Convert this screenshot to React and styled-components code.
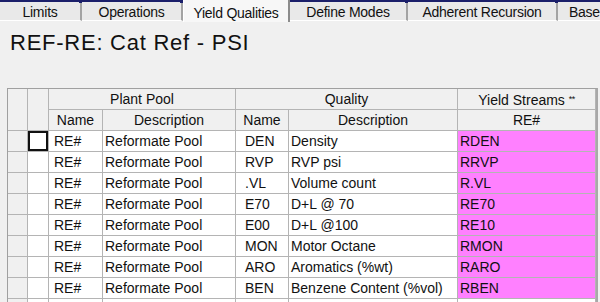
import React from 'react';
import styled, { createGlobalStyle } from 'styled-components';

const GlobalStyle = createGlobalStyle`
  html, body {
    margin: 0;
    padding: 0;
    background: #f0f0f0;
  }
`;

const tabs = [
  { label: 'Limits', width: 82 },
  { label: 'Operations', width: 101 },
  { label: 'Yield Qualities', width: 107, active: true },
  { label: 'Define Modes', width: 118 },
  { label: 'Adherent Recursion', width: 150 },
  { label: 'Base', width: 60, left: true }
];

const rows = [
  ['RE#', 'Reformate Pool', 'DEN', 'Density', 'RDEN'],
  ['RE#', 'Reformate Pool', 'RVP', 'RVP psi', 'RRVP'],
  ['RE#', 'Reformate Pool', '.VL', 'Volume count', 'R.VL'],
  ['RE#', 'Reformate Pool', 'E70', 'D+L @ 70', 'RE70'],
  ['RE#', 'Reformate Pool', 'E00', 'D+L @100', 'RE10'],
  ['RE#', 'Reformate Pool', 'MON', 'Motor Octane', 'RMON'],
  ['RE#', 'Reformate Pool', 'ARO', 'Aromatics (%wt)', 'RARO'],
  ['RE#', 'Reformate Pool', 'BEN', 'Benzene Content (%vol)', 'RBEN']
];

// left padding of each data column, as the grid draws them
const pads = [5, 2, 9, 2, 2];

const App = () => (
  <Page>
    <GlobalStyle />
    <TabStrip>
      {tabs.map(t => (
        <Tab key={t.label} $width={t.width} $active={t.active} $left={t.left}>
          {t.label}
        </Tab>
      ))}
    </TabStrip>

    <Title>REF-RE: Cat Ref - PSI</Title>

    <Grid>
      <Corner />
      <Corner />
      <HeadCell $span={2}>Plant Pool</HeadCell>
      <HeadCell $span={2}>Quality</HeadCell>
      <HeadCell>
        Yield Streams <Stars>**</Stars>
      </HeadCell>
      <HeadCell>Name</HeadCell>
      <HeadCell>Description</HeadCell>
      <HeadCell>Name</HeadCell>
      <HeadCell>Description</HeadCell>
      <HeadCell>RE#</HeadCell>

      {rows.map((r, i) => (
        <React.Fragment key={i}>
          <RowHead />
          <Cell $pad={0}>{i === 0 && <FocusBox />}</Cell>
          {r.map((v, j) => (
            <Cell key={j} $pad={pads[j]} $yield={j === 4}>
              {v}
            </Cell>
          ))}
        </React.Fragment>
      ))}

      <RowHead />
      {pads.concat(0).map((p, j) => (
        <Cell key={j} $pad={p} />
      ))}
    </Grid>
  </Page>
);
export default App;

const Page = styled.div`
  width: 600px;
  height: 302px;
  overflow: hidden;
  background: #f0f0f0;
  font-family: "Liberation Sans", Arial, sans-serif;
  color: #000;
`;

const TabStrip = styled.div`
  display: flex;
  height: 21px;
  white-space: nowrap;
`;

const Tab = styled.div`
  position: relative;
  flex: 0 0 ${({ $width }) => $width}px;
  box-sizing: border-box;
  height: ${({ $active }) => ($active ? 22 : 21)}px;
  padding-top: ${({ $active }) => ($active ? 4 : 2)}px;
  padding-left: ${({ $left }) => ($left ? 11 : 0)}px;
  display: flex;
  justify-content: ${({ $left }) => ($left ? 'flex-start' : 'center')};
  align-items: center;
  font-size: 14px;
  letter-spacing: -0.25px;
  color: #111;
  background: ${({ $active }) => ($active ? '#f7f7f7' : '#e9e9e9')};
  border-top: ${({ $active }) => ($active ? 'none' : '2px solid #1b1f6a')};
  border-left: ${({ $active }) => ($active ? '1px solid #ffffff' : 'none')};
  border-right: 2px solid ${({ $active }) => ($active ? '#8c8c8c' : '#a3a3a3')};
  border-bottom: ${({ $active }) => ($active ? 'none' : '1px solid #ffffff')};

  &::after {
    content: '';
    position: absolute;
    top: -2px;
    right: -3px;
    width: 4px;
    height: 3px;
    background: ${({ $active }) => ($active ? 'transparent' : '#1b1f6a')};
  }
`;

const Title = styled.h1`
  margin: 9px 0 0 10px;
  font-size: 22px;
  font-weight: normal;
  line-height: 26px;
  letter-spacing: 0.75px;
  color: #111;
`;

const Grid = styled.div`
  margin: 32px 0 0 7px;
  display: grid;
  grid-template-columns: 20px 21px 54px 133px 53px 169px 138px;
  grid-auto-rows: 21px;
  width: max-content;
  border-top: 1px solid #a0a0a0;
  border-left: 1px solid #a0a0a0;
  border-right: 2px solid #a8a8a8;
`;

const CellBase = styled.div`
  box-sizing: border-box;
  border-right: 1px solid #b4b4b4;
  border-bottom: 1px solid #b4b4b4;
  font-size: 14px;
  line-height: 20px;
  white-space: nowrap;
  overflow: hidden;
`;

const Corner = styled(CellBase)`
  grid-row: span 2;
  background: #f0f0f0;
`;

const HeadCell = styled(CellBase)`
  grid-column: span ${({ $span }) => $span || 1};
  background: #f0f0f0;
  text-align: center;
  color: #111;
`;

const Stars = styled.span`
  font-size: 9px;
  vertical-align: 3px;
  letter-spacing: -0.5px;
`;

const RowHead = styled(CellBase)`
  background: #f0f0f0;
`;

const Cell = styled(CellBase)`
  padding-left: ${({ $pad }) => $pad}px;
  background: ${({ $yield }) => ($yield ? '#ff80ff' : '#ffffff')};
  color: #111;
`;

const FocusBox = styled.div`
  box-sizing: border-box;
  width: 100%;
  height: 100%;
  border: 2px solid #111;
`;
